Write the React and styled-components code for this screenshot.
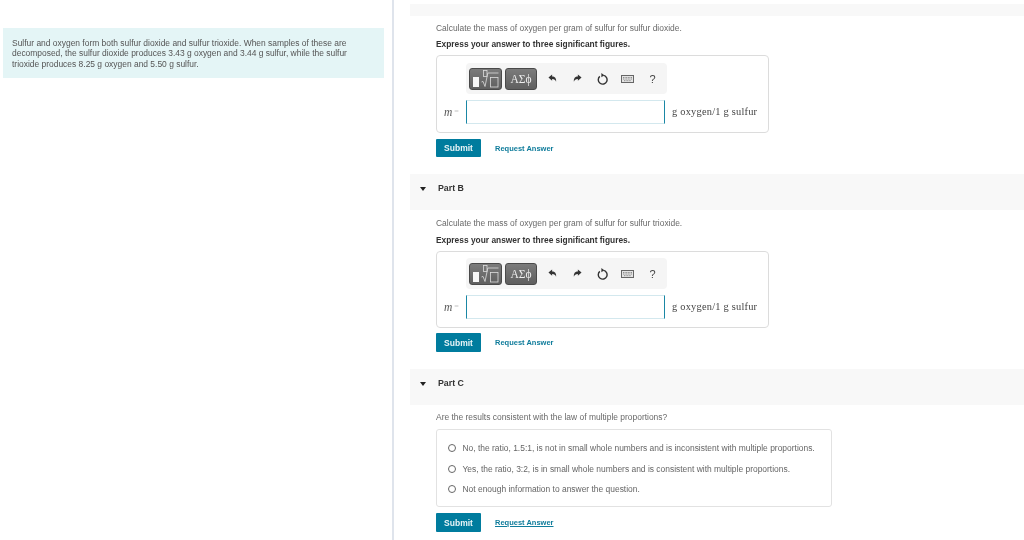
import React from "react";
import styled, { createGlobalStyle } from "styled-components";

const Global = createGlobalStyle`
  html, body { margin: 0; padding: 0; background: #fff; }
  body { font-family: "Liberation Sans", Arial, sans-serif; color: #555; }
`;
const Page = styled.div`
  display: flex; width: 1024px; height: 540px; overflow: hidden; filter: blur(0.3px);
`;
const LeftColumn = styled.aside`
  box-sizing: border-box; width: 394px; height: 540px; flex: none;
  padding: 28px 8px 0 3px; border-right: 2px solid #dfe4ec;
`;
const Intro = styled.p`
  margin: 0; height: 50px; box-sizing: border-box; padding: 10px 8px 0 9px;
  background: #e4f5f6; font-size: 8.45px; line-height: 10.4px; color: #555;
`;
const RightColumn = styled.main`
  flex: 1; min-width: 0; padding: 4px 0 0 16px;
`;
const TopStrip = styled.div`
  height: 12px; background: #f8f8f8;
`;
const PartHeader = styled.div`
  display: flex; align-items: flex-start; height: 36px; box-sizing: border-box;
  margin-top: 17px; padding: 9px 0 0 10px; background: #f8f8f8;
`;
const Caret = styled.span`
  width: 0; height: 0; margin: 4px 12px 0 0;
  border-left: 3.5px solid transparent; border-right: 3.5px solid transparent;
  border-top: 4px solid #222;
`;
const PartTitle = styled.h3`
  margin: 0; font-size: 8.8px; line-height: 11px; font-weight: 700; color: #333;
`;
const Body = styled.section`
  padding: ${p => p.$top}px 0 0 26px;
`;
const Prompt = styled.p`
  margin: 0; font-size: 8.45px; line-height: 12px; color: #6a6a6a;
`;
const Emphasis = styled.p`
  margin: ${p => p.$top}px 0 0; font-size: 8.4px; line-height: 12px; font-weight: 700; color: #333;
`;
const AnswerBox = styled.div`
  box-sizing: border-box; width: 333px; height: ${p => p.$h}px; margin-top: 5px;
  padding: ${p => p.$pad}px 0 0 7px; border: 1px solid #dcdcdc; border-radius: 4px;
  display: grid; grid-template-columns: 22px 199px auto; grid-template-rows: 31px 24px;
  row-gap: 6px;
`;
const Toolbar = styled.div`
  grid-column: 2 / 4; box-sizing: border-box; width: 201px; height: 31px;
  display: flex; align-items: center; padding: 0 3px;
  background: #f5f5f5; border-radius: 4px;
`;
const TemplateButton = styled.div`
  box-sizing: border-box; width: ${p => p.$w}px; height: 22px; margin-right: 3px; flex: none;
  display: flex; align-items: center; justify-content: center;
  background: linear-gradient(#7b7b7b, #5f5f5f); border: 1px solid #4a4a4a; border-radius: 3px;
  color: #eee; font-family: "Liberation Serif", serif; font-size: 11.5px;
`;
const ToolIcon = styled.div`
  width: 25px; flex: none; display: flex; justify-content: center; align-items: center;
  color: #444; font-size: 11px; font-family: "Liberation Sans", sans-serif;
`;
const IconSet = styled.div`
  display: flex; align-items: center;
`;
const VarLabel = styled.div`
  display: flex; align-items: center; padding-bottom: 1px; font-family: "Liberation Serif", serif; font-style: italic;
  font-size: 11.5px; color: #555;
`;
const Equals = styled.span`
  font-style: normal; color: #c4c4c4; margin-left: 2px; font-size: 8px;
`;
const AnswerInput = styled.div`
  box-sizing: border-box; height: 24px;
  border: 1px solid #d3e8ee; border-left: 1px solid #1a87a5; border-right: 1px solid #1a87a5;
`;
const Unit = styled.div`
  display: flex; align-items: center; padding: 0 0 1px 7px;
  font-family: "Liberation Serif", serif; font-size: 10.4px; color: #444; white-space: nowrap;
  letter-spacing: .22px;
`;
const Actions = styled.div`
  display: flex; align-items: center; margin-top: ${p => p.$top}px;
`;
const Submit = styled.div`
  box-sizing: border-box; width: 45px; height: ${p => p.$h}px; display: flex; align-items: center; justify-content: center;
  background: #007c9e; color: #e8f4f7; font-size: 8.5px; font-weight: 700; border-radius: 1px;
`;
const RequestLink = styled.span`
  margin-left: 14px; color: #0f7c9b; font-size: 7.5px; font-weight: 700;
  text-decoration: ${p => p.$underline ? "underline" : "none"};
`;
const Options = styled.div`
  box-sizing: border-box; width: 396px; height: 78px; margin-top: 6px; padding: 8px 0 0 11px;
  border: 1px solid #e2e2e2; border-radius: 3px;
`;
const Option = styled.label`
  display: flex; align-items: center; height: 20.5px; font-size: 8.45px; color: #666; white-space: nowrap;
`;
const Radio = styled.span`
  box-sizing: border-box; width: 8px; height: 8px; margin-right: 6.5px; flex: none;
  border: 1px solid #666; border-radius: 50%;
`;

const Undo = ({ flip }) => (
  <svg width="9" height="9" viewBox="0 0 10 10" style={flip ? { transform: "scaleX(-1)" } : undefined}>
    <path d="M0.5 4 L4.6 0.6 V2.7 C7.6 2.7 9.5 4.8 9 8.6 C8.3 6.4 7 5.5 4.6 5.5 V7.6 Z" fill="#333" />
  </svg>
);
const Reset = () => (
  <svg width="12" height="12" viewBox="0 0 12 12">
    <path d="M6.4 2.4 A4.4 4.4 0 1 1 2.8 3.4" fill="none" stroke="#333" strokeWidth="1.4" />
    <path d="M4.4 0 L7.2 2.3 L4.4 4.2 Z" fill="#333" />
  </svg>
);
const Keyboard = () => (
  <svg width="13" height="8" viewBox="0 0 13 8">
    <rect x=".5" y=".5" width="12" height="7" fill="#e4e4e4" stroke="#666" />
    <path d="M2 2.5h9M2 4h9M3 5.7h7" stroke="#777" strokeWidth=".8" strokeDasharray="1 .6" />
  </svg>
);
const RadicalGlyph = () => (
  <svg width="30" height="20" viewBox="0 0 30 20">
    <rect x="2" y="8" width="6" height="10" fill="#f6f6f6" />
    <rect x="12.5" y="1.5" width="3.5" height="6" fill="none" stroke="#ddd" strokeWidth=".8" />
    <path d="M10.5 13 L12 12.4 L14 17.5 L16.8 4 H27.5" fill="none" stroke="#ddd" strokeWidth=".8" />
    <rect x="19.5" y="8.5" width="7.5" height="9.5" fill="none" stroke="#ddd" strokeWidth=".8" />
  </svg>
);

const MathInput = ({ pad, h }) => (
  <AnswerBox $pad={pad} $h={h}>
    <span />
    <Toolbar>
      <TemplateButton $w={33}><RadicalGlyph /></TemplateButton>
      <TemplateButton $w={32}>ΑΣϕ</TemplateButton>
      <IconSet>
        <ToolIcon><Undo /></ToolIcon>
        <ToolIcon><Undo flip /></ToolIcon>
        <ToolIcon><Reset /></ToolIcon>
        <ToolIcon><Keyboard /></ToolIcon>
        <ToolIcon>?</ToolIcon>
      </IconSet>
    </Toolbar>
    <VarLabel>m<Equals>=</Equals></VarLabel>
    <AnswerInput />
    <Unit>g oxygen/1 g sulfur</Unit>
  </AnswerBox>
);

const Act = ({ top, h = 18, underline }) => (
  <Actions $top={top}>
    <Submit $h={h}>Submit</Submit>
    <RequestLink $underline={underline}>Request Answer</RequestLink>
  </Actions>
);

export default function App() {
  return (
    <Page>
      <Global />
      <LeftColumn>
        <Intro>
          Sulfur and oxygen form both sulfur dioxide and sulfur trioxide. When samples of these are
          decomposed, the sulfur dioxide produces 3.43 g oxygen and 3.44 g sulfur, while the sulfur
          trioxide produces 8.25 g oxygen and 5.50 g sulfur.
        </Intro>
      </LeftColumn>
      <RightColumn>
        <TopStrip />
        <Body $top={6}>
          <Prompt>Calculate the mass of oxygen per gram of sulfur for sulfur dioxide.</Prompt>
          <Emphasis $top={4}>Express your answer to three significant figures.</Emphasis>
          <MathInput pad={7} h={78} />
          <Act top={6} />
        </Body>
        <PartHeader><Caret /><PartTitle>Part B</PartTitle></PartHeader>
        <Body $top={7}>
          <Prompt>Calculate the mass of oxygen per gram of sulfur for sulfur trioxide.</Prompt>
          <Emphasis $top={5}>Express your answer to three significant figures.</Emphasis>
          <MathInput pad={6} h={77} />
          <Act top={5} h={19} />
        </Body>
        <PartHeader><Caret /><PartTitle>Part C</PartTitle></PartHeader>
        <Body $top={6}>
          <Prompt>Are the results consistent with the law of multiple proportions?</Prompt>
          <Options>
            <Option><Radio />No, the ratio, 1.5:1, is not in small whole numbers and is inconsistent with multiple proportions.</Option>
            <Option><Radio />Yes, the ratio, 3:2, is in small whole numbers and is consistent with multiple proportions.</Option>
            <Option><Radio />Not enough information to answer the question.</Option>
          </Options>
          <Act top={6} h={19} underline />
        </Body>
      </RightColumn>
    </Page>
  );
}
